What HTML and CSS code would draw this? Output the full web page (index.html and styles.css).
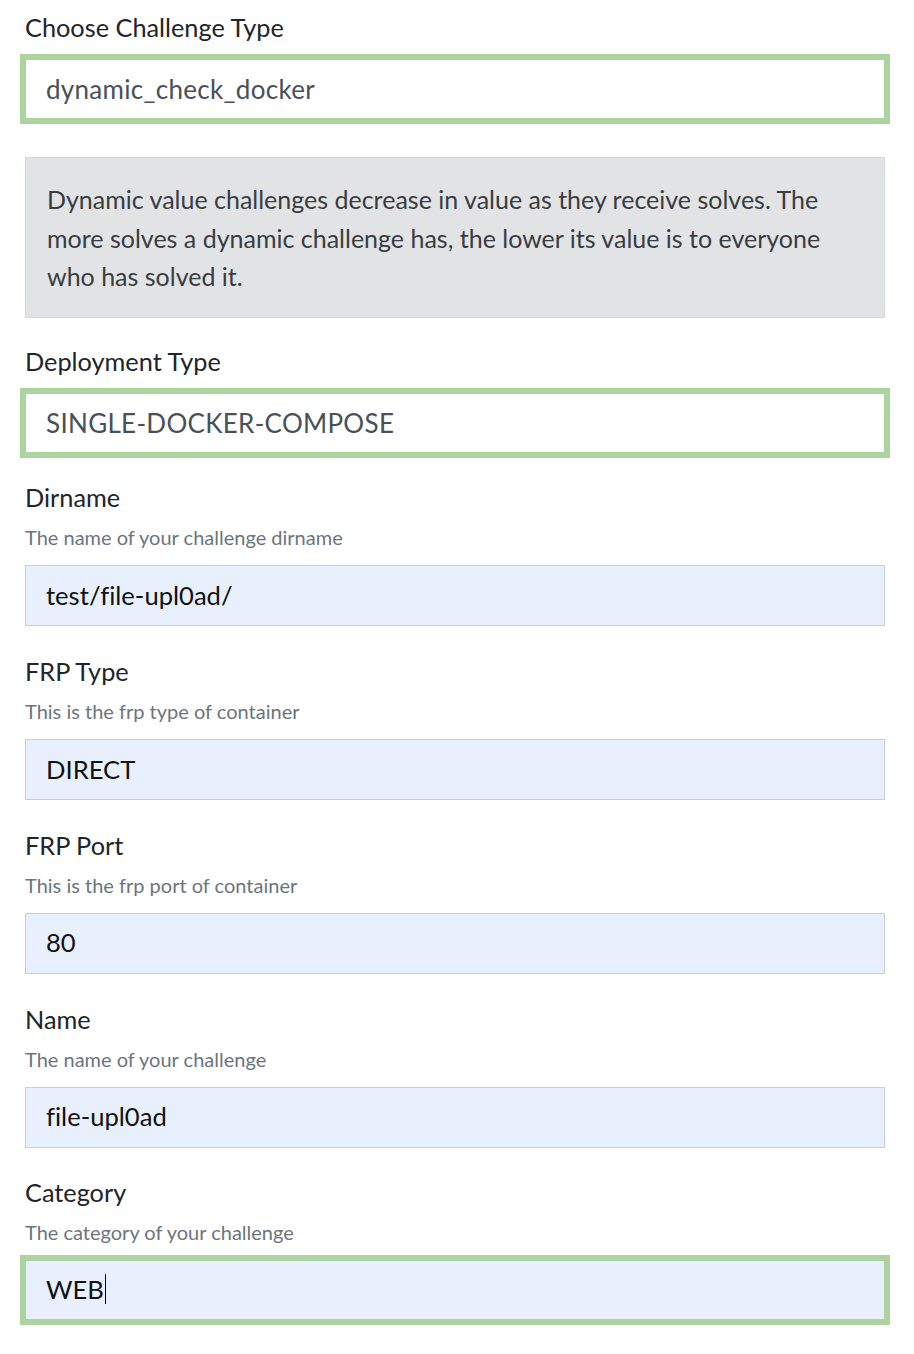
FILE: index.html
```html
<!DOCTYPE html>
<html lang="en">
<head>
    <meta charset="UTF-8">
    <meta name="viewport" content="width=device-width, initial-scale=1.0">
    <title>Create Challenge</title>
    <link rel="stylesheet" href="styles.css">
</head>
<body>
    <form class="challenge-form">
        <div class="form-group">
            <label class="form-label select-label" for="chal-type">Choose Challenge Type</label>
            <select id="chal-type" class="form-select focused">
                <option>dynamic_check_docker</option>
                <option>standard</option>
                <option>dynamic</option>
            </select>
        </div>

        <div class="alert">
            Dynamic value challenges decrease in value as they receive solves. The
            more solves a dynamic challenge has, the lower its value is to everyone
            who has solved it.
        </div>

        <div class="form-group">
            <label class="form-label select-label" for="deploy-type">Deployment Type</label>
            <select id="deploy-type" class="form-select focused">
                <option>SINGLE-DOCKER-COMPOSE</option>
                <option>SINGLE-DOCKER</option>
            </select>
        </div>

        <div class="form-group">
            <label class="form-label" for="dirname">Dirname</label>
            <div class="form-help">The name of your challenge dirname</div>
            <input type="text" id="dirname" class="form-input" value="test/file-upl0ad/">
        </div>

        <div class="form-group">
            <label class="form-label" for="frp-type">FRP Type</label>
            <div class="form-help">This is the frp type of container</div>
            <input type="text" id="frp-type" class="form-input" value="DIRECT">
        </div>

        <div class="form-group">
            <label class="form-label" for="frp-port">FRP Port</label>
            <div class="form-help">This is the frp port of container</div>
            <input type="text" id="frp-port" class="form-input" value="80">
        </div>

        <div class="form-group">
            <label class="form-label" for="name">Name</label>
            <div class="form-help">The name of your challenge</div>
            <input type="text" id="name" class="form-input" value="file-upl0ad">
        </div>

        <div class="form-group">
            <label class="form-label">Category</label>
            <div class="form-help">The category of your challenge</div>
            <div class="form-input focused">WEB<span class="caret"></span></div>
        </div>
    </form>
</body>
</html>
```
FILE: styles.css
```css
body {
    font-family: Lato, "Open Sans", sans-serif;
    font-variant-ligatures: none;
    margin: 0;
    padding: 9px 0 0 25px;
    background-color: #ffffff;
    color: #212529;
}
.challenge-form {
    width: 860px;
}
.form-group {
    margin-bottom: 26.8px;
}
.form-label {
    display: block;
    font-size: 25.3px;
    line-height: 36px;
    margin-bottom: 8px;
    color: #212529;
}
.select-label {
    margin-bottom: 14px;
}
.form-help {
    font-size: 20px;
    line-height: 28px;
    color: #6c757d;
    margin-bottom: 14px;
}
.form-select {
    display: block;
    width: 100%;
    height: 60px;
    padding: 0 20px;
    font-family: Lato, "Open Sans", sans-serif;
    font-size: 26px;
    letter-spacing: 0.3px;
    color: #495057;
    background-color: #ffffff;
    border: 1px solid #acd3a0;
    border-radius: 0;
    appearance: none;
    -webkit-appearance: none;
    box-sizing: border-box;
}
.form-input {
    display: flex;
    align-items: center;
    width: 100%;
    height: 61px;
    padding: 0 20px 2px;
    font-family: Lato, "Open Sans", sans-serif;
    font-variant-ligatures: none;
    font-size: 25.6px;
    color: #111;
    background-color: #e8f0fe;
    border: 1px solid #c8ced6;
    border-radius: 0;
    box-sizing: border-box;
    outline: none;
}
.focused {
    border-color: #acd3a0;
    box-shadow: 0 0 0 5px #acd3a0;
}
div.form-input.focused {
    height: 60px;
}
.caret {
    display: inline-block;
    width: 1px;
    height: 30px;
    margin-left: 1px;
    background-color: #000;
}
.alert {
    margin: 38px 0 25px;
    padding: 22px 21px 21px;
    font-size: 25px;
    line-height: 38.5px;
    color: #383d41;
    background-color: #e2e3e5;
    border: 1px solid #d6d8db;
}
```
